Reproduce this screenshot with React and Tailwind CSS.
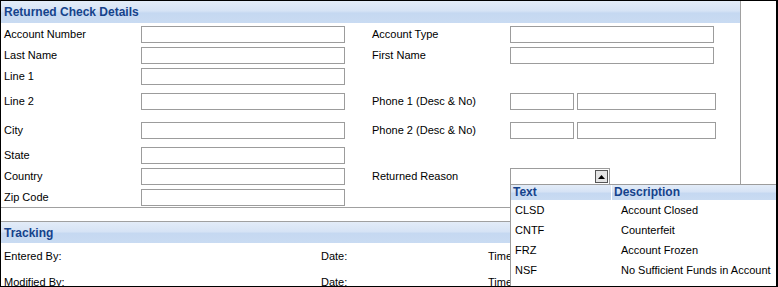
const hdr = 'bg-[linear-gradient(#e3ecf8,#d6e3f5_45%,#c5d8f1_55%,#c9dbf2)]';

function Field({ w = 'w-[204px]' }) {
  return <div className={`${w} h-[17px] border border-[#9c9c9c] bg-white`} />;
}

function Row({ h, label, children, label2, children2 }) {
  return (
    <div className={`flex items-center ${h}`}>
      <div className="w-[140px] pl-[3px]">{label}</div>
      <div className="w-[231px]">{children}</div>
      <div className="w-[138px]">{label2}</div>
      <div className="flex gap-[3px]">{children2}</div>
    </div>
  );
}

const reasons = [
  ['CLSD', 'Account Closed'],
  ['CNTF', 'Counterfeit'],
  ['FRZ', 'Account Frozen'],
  ['NSF', 'No Sufficient Funds in Account'],
];

export default function App() {
  return (
    <div className="relative w-[778px] h-[287px] overflow-hidden bg-white border border-black border-r-2 text-[11px] text-black font-['Liberation_Sans',Arial,sans-serif]">
      {/* Returned check panel */}
      <div className="w-[740px] h-[207px] border-r border-b border-[#a0a0a0]">
        <div className={`h-[22px] ${hdr} pl-[3px] flex items-center text-[12px] font-bold text-[#15428b]`}>Returned Check Details</div>
        <Row h="h-[21px] mt-px" label="Account Number" children={<Field />} label2="Account Type" children2={<Field />} />
        <Row h="h-[21px]" label="Last Name" children={<Field />} label2="First Name" children2={<Field />} />
        <Row h="h-[21px]" label="Line 1" children={<Field />} />
        <Row h="h-[29px]" label="Line 2" children={<Field />} label2="Phone 1 (Desc & No)" children2={<><Field w="w-[64px]" /><Field w="w-[139px]" /></>} />
        <Row h="h-[29px]" label="City" children={<Field />} label2="Phone 2 (Desc & No)" children2={<><Field w="w-[64px]" /><Field w="w-[139px]" /></>} />
        <Row h="h-[21px]" label="State" children={<Field />} />
        <Row
          h="h-[21px]"
          label="Country"
          children={<Field />}
          label2="Returned Reason"
          children2={
            <div className="w-[100px] h-[17px] border border-[#9c9c9c] bg-white flex justify-end items-center pr-px">
              <div className="w-[13px] h-[13px] bg-[#e4e4e4] border border-[#555] flex items-center justify-center">
                <svg width="7" height="4" viewBox="0 0 7 4"><path d="M3.5 0L7 4H0z" fill="#000" /></svg>
              </div>
            </div>
          }
        />
        <Row h="h-[21px]" label="Zip Code" children={<Field />} />
      </div>

      {/* Tracking panel */}
      <div className="mt-[13px] border-t border-[#a0a0a0]">
        <div className={`h-[21px] ${hdr} pl-[3px] flex items-center text-[12px] font-bold text-[#15428b]`}>Tracking</div>
        <div className="flex items-center h-[25px] mt-px">
          <div className="w-[320px] pl-[3px]">Entered By:</div>
          <div className="w-[167px]">Date:</div>
          <div>Time</div>
        </div>
        <div className="flex items-center h-[27px]">
          <div className="w-[320px] pl-[3px]">Modified By:</div>
          <div className="w-[167px]">Date:</div>
          <div>Time</div>
        </div>
      </div>

      {/* Open dropdown list */}
      <div className="absolute left-[509px] top-[183px] w-[280px] h-[110px] bg-white border-l border-t border-[#9c9c9c]">
        <div className={`flex h-[15px] ${hdr} text-[12px] font-bold text-[#15428b] leading-[15px]`}>
          <div className="w-[101px] pl-[2px] border-r border-white">Text</div>
          <div className="pl-[2px]">Description</div>
        </div>
        {reasons.map(([code, desc]) => (
          <div key={code} className="flex items-center h-[20px] first:mt-px">
            <div className="w-[110px] pl-[4px]">{code}</div>
            <div>{desc}</div>
          </div>
        ))}
      </div>
    </div>
  );
}
